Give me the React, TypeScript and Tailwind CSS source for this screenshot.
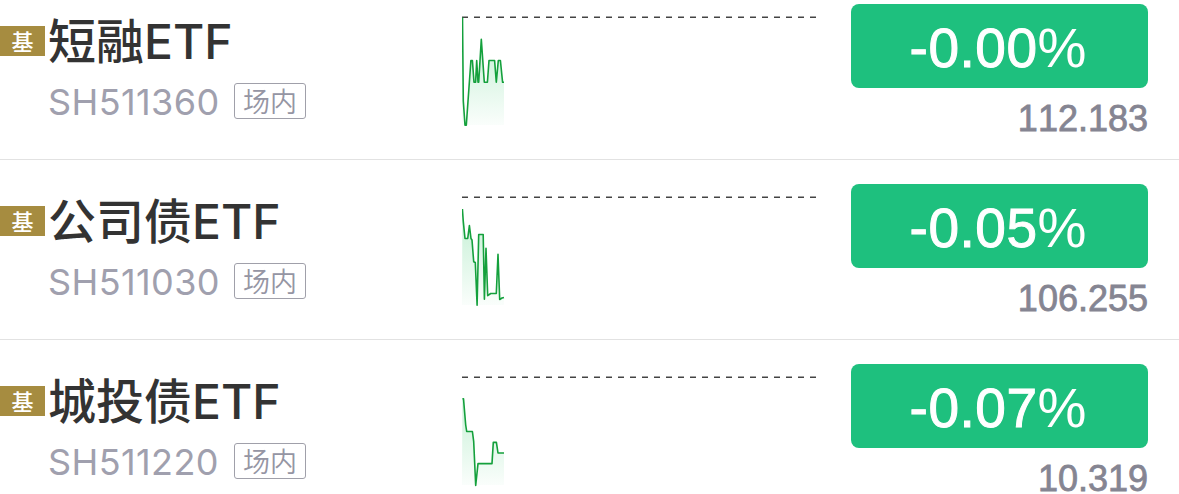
type Fund = {
  name: string;
  code: string;
  change: string;
  price: string;
  points: string;
};

const funds: Fund[] = [
  {
    name: "短融",
    code: "SH511360",
    change: "-0.00",
    price: "112.183",
    points:
      "0.5,17.5 1.3,101 3,125.3 4.3,125.3 8.9,60.5 10.4,60.5 12,82.3 13.6,82.3 14.7,60.5 16,82.3 16.7,82.3 19.3,39.3 22.3,82.3 25.4,82.3 27,60.5 32.6,60.5 34.3,82.3 36.3,60.5 38.4,60.5 40.6,82.3 42,82.3",
  },
  {
    name: "公司债",
    code: "SH511030",
    change: "-0.05",
    price: "106.255",
    points:
      "0.4,29 1.3,41.7 3,58.5 5.7,58.5 7.4,45.5 9,58.5 10,60 11.7,81.7 13.3,82.5 15.1,125.3 16.7,54.5 21.2,54.5 22.4,119.3 24,68.3 25.7,115.7 28.7,113.5 34.3,113.5 36,74.3 37.7,119.5 40,118 42,117.5",
  },
  {
    name: "城投债",
    code: "SH511220",
    change: "-0.07",
    price: "10.319",
    points:
      "0.4,38.7 1.5,38.7 3.7,65 4.7,71.5 10.4,71.5 11.7,81.7 13.7,125.5 16,103.6 30,103.6 31.3,82.4 34.4,82.4 36,93 42,93",
  },
];

function Sparkline({ points, id }: { points: string; id: string }) {
  return (
    <svg className="shrink-0" width="355" height="140" viewBox="0 0 355 140" fill="none">
      <defs>
        <linearGradient id={id} gradientUnits="userSpaceOnUse" x1="0" y1="20" x2="0" y2="126">
          <stop offset="0" stopColor="#22c55e" stopOpacity="0.3" />
          <stop offset="1" stopColor="#22c55e" stopOpacity="0.02" />
        </linearGradient>
      </defs>
      <polygon points={`0,125 ${points} 42,125`} fill={`url(#${id})`} />
      <path d="M0 17.3H354" stroke="#444444" strokeWidth="1.4" strokeDasharray="6 6" />
      <polyline points={points} stroke="#14a03c" strokeWidth="1.6" strokeLinejoin="round" />
    </svg>
  );
}

function FundRow({ fund }: { fund: Fund }) {
  return (
    <div className="flex h-[180px] border-b border-[#e2e2e2] pt-5">
      <div className="mt-[26px] flex h-[30px] w-[45px] shrink-0 items-center justify-center bg-[#a68c40] pb-0.5 text-[22px] leading-none font-medium text-white">
        基
      </div>
      <div className="w-[417px] shrink-0 pl-1">
        <div className="mt-[11px] flex h-[60px] items-center whitespace-nowrap text-[48px] leading-none font-medium text-[#333333]">
          <span className="-ml-px pb-[6px]">{fund.name}</span>
          <span className="pt-0.5 font-['Inter','Noto_Sans_CJK_SC',sans-serif] text-[48px]">ETF</span>
        </div>
        <div className="mt-[12px] flex h-9 items-center text-[#a0a0ae]">
          <span className="-ml-px w-[186px] pt-0.5 font-['Inter',sans-serif] text-[36px] leading-none font-normal tracking-[0.4px]">
            {fund.code}
          </span>
          <span className="flex h-9 w-[72px] items-center justify-center rounded-[3px] border border-[#a0a0aa] pb-0.5 text-[27px] leading-none font-[350] text-[#9595a3]">
            场内
          </span>
        </div>
      </div>
      <Sparkline points={fund.points} id={`fill-${fund.code}`} />
      <div className="ml-[33.5px] w-[297.5px] shrink-0 pt-1 font-['Liberation_Sans',Arial,sans-serif]">
        <div className="flex h-[84px] items-center justify-center rounded-lg bg-[#1ec07e] pt-1 pr-0.5 text-[55px] leading-none tracking-[0.5px] text-white">
          <span className="[-webkit-text-stroke:1px_white]">{fund.change}</span>
          <span>%</span>
        </div>
        <div className="mt-[15px] text-right text-[36px] leading-8 text-[#858592] [font-kerning:none] [-webkit-text-stroke:0.8px_#858592]">
          {fund.price}
        </div>
      </div>
    </div>
  );
}

export default function App() {
  return (
    <div className="h-[494px] w-[1179px] overflow-hidden bg-white font-['Noto_Sans_CJK_SC',sans-serif]">
      <div className="-mt-5">
        {funds.map((fund) => (
          <FundRow key={fund.code} fund={fund} />
        ))}
      </div>
    </div>
  );
}
